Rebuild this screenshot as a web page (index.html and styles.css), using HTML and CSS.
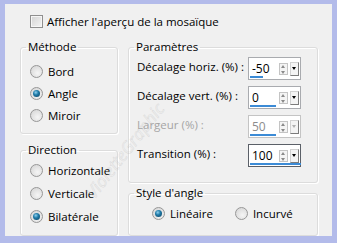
FILE: index.html
```html
<!DOCTYPE html>
<html lang="fr">
<head>
  <meta charset="UTF-8" />
  <title>Mosaïque</title>
  <link rel="stylesheet" href="styles.css">
</head>
<body>
  <div class="dialog">
    <label class="check-row">
      <span class="checkbox"></span>
      Afficher l'aperçu de la mosaïque
    </label>

    <div class="columns">
      <div class="col-left">
        <fieldset class="group method">
          <legend>Méthode</legend>
          <div class="radio-row"><span class="radio"></span>Bord</div>
          <div class="radio-row"><span class="radio checked"></span>Angle</div>
          <div class="radio-row"><span class="radio"></span>Miroir</div>
        </fieldset>

        <fieldset class="group direction">
          <legend>Direction</legend>
          <div class="radio-row"><span class="radio"></span>Horizontale</div>
          <div class="radio-row"><span class="radio"></span>Verticale</div>
          <div class="radio-row"><span class="radio checked"></span>Bilatérale</div>
        </fieldset>
      </div>

      <div class="col-right">
        <fieldset class="group params">
          <legend>Paramètres</legend>
          <div class="field-row">
            <span class="field-label">Décalage horiz. (%) :</span>
            <div class="spin">
              <span class="spin-value">-50</span>
              <span class="spin-arrows"><i class="up"></i><i class="down"></i></span>
              <span class="spin-drop"></span>
              <span class="spin-bar" style="width: 13px"></span>
            </div>
          </div>
          <div class="field-row">
            <span class="field-label">Décalage vert. (%) :</span>
            <div class="spin">
              <span class="spin-value">0</span>
              <span class="spin-arrows"><i class="up"></i><i class="down"></i></span>
              <span class="spin-drop"></span>
              <span class="spin-bar" style="width: 26px"></span>
            </div>
          </div>
          <div class="field-row disabled">
            <span class="field-label">Largeur (%) :</span>
            <div class="spin">
              <span class="spin-value">50</span>
              <span class="spin-arrows"><i class="up"></i><i class="down"></i></span>
              <span class="spin-drop"></span>
              <span class="spin-bar" style="width: 26px"></span>
            </div>
          </div>
          <div class="field-row">
            <span class="field-label">Transition (%) :</span>
            <div class="spin focused">
              <span class="spin-value">100</span>
              <span class="spin-arrows"><i class="up"></i><i class="down"></i></span>
              <span class="spin-drop"></span>
              <span class="spin-bar" style="width: 51px"></span>
            </div>
          </div>
        </fieldset>

        <fieldset class="group style">
          <legend>Style d'angle</legend>
          <div class="style-row">
            <div class="radio-row"><span class="radio checked"></span>Linéaire</div>
            <div class="radio-row"><span class="radio"></span>Incurvé</div>
          </div>
        </fieldset>
      </div>
    </div>

    <span class="watermark">VioletteGraphic</span>
  </div>
</body>
</html>
```

FILE: styles.css
```css
body {
  margin: 0;
  font-family: "Open Sans", "Noto Sans", sans-serif;
  font-size: 11.5px;
  color: #000;
}

.dialog {
  position: relative;
  overflow: hidden;
  width: 337px;
  height: 243px;
  box-sizing: border-box;
  border-style: solid;
  border-color: #b3bbea;
  border-width: 4px 5px 7px 5px;
  background: #f0f0f0;
  padding: 9px 14px 0 15px;
}

.check-row {
  display: flex;
  align-items: center;
  gap: 4px;
  height: 16px;
  padding-left: 10px;
}

.checkbox {
  width: 11px;
  height: 11px;
  border: 1px solid #8f8f8f;
  background: linear-gradient(135deg, #d4d4d4, #f4f4f4);
  box-shadow: inset 0 0 0 1px #f6f6f6;
}

.columns {
  display: flex;
  gap: 10px;
  margin-top: 10px;
}

.col-left {
  display: flex;
  flex-direction: column;
  gap: 8px;
  width: 98px;
}

.col-right {
  display: flex;
  flex-direction: column;
  gap: 2px;
  width: 190px;
}

.group {
  margin: 0;
  border: 1px solid #dcdcdc;
  border-radius: 3px;
  box-shadow: inset 1px 1px 0 #fff, 1px 1px 0 #fff;
  min-width: 0;
}

.group legend {
  padding: 0 2px;
  margin-left: -4px;
  line-height: 16px;
}

.method {
  padding: 5px 0 7px 9px;
}

.direction {
  padding: 1px 0 7px 9px;
}

.direction .radio-row {
  height: 23px;
}

.radio-row {
  display: flex;
  align-items: center;
  gap: 5px;
  height: 22px;
}

.radio {
  position: relative;
  width: 11px;
  height: 11px;
  border: 1px solid #979797;
  border-radius: 50%;
  background: radial-gradient(circle at 60% 65%, #f5f5f5, #d2d2d2);
}

.radio.checked::after {
  content: "";
  position: absolute;
  left: 2px;
  top: 2px;
  width: 7px;
  height: 7px;
  border-radius: 50%;
  background: radial-gradient(circle at 40% 35%, #8fd0ee 0, #1f7ba8 40%, #0d3e5c 100%);
}

.params {
  padding: 2px 16px 15px 8px;
}

.params legend {
  margin-left: -3px;
}

.field-row {
  display: flex;
  justify-content: space-between;
  align-items: center;
  height: 23px;
  margin-bottom: 6px;
}

.field-row:last-child {
  margin-bottom: 0;
}

.field-label {
  margin-top: -4px;
}

.disabled .field-label {
  color: #a5a5a5;
}

.spin {
  position: relative;
  display: flex;
  align-items: center;
  width: 51px;
  height: 21px;
  border: 1px solid #a9abaf;
  background: #fff;
}

.spin.focused {
  border-color: #5b6068;
}

.spin-value {
  flex: 1;
  padding-left: 3px;
  font-size: 12px;
}

.disabled .spin {
  border-color: #c4c4c4;
}

.disabled .spin-value {
  color: #8c8c8c;
}

.spin-arrows {
  display: flex;
  flex-direction: column;
  gap: 1px;
  width: 9px;
  height: 12px;
  margin-right: 2px;
  border: 1px solid #c4c4c4;
  box-sizing: border-box;
  background: #f4f4f4;
}

.spin-arrows i {
  flex: 1;
  display: block;
  position: relative;
}

.spin-arrows .up::after,
.spin-arrows .down::after {
  content: "";
  position: absolute;
  left: 1px;
  border-left: 2.5px solid transparent;
  border-right: 2.5px solid transparent;
}

.spin-arrows .up::after {
  top: 1px;
  border-bottom: 3px solid #8a8a8a;
}

.spin-arrows .down::after {
  bottom: 0;
  border-top: 3px solid #8a8a8a;
}

.spin-drop {
  position: relative;
  width: 9px;
  height: 14px;
  margin-right: 1px;
  border: 1px solid #d2d2d2;
  border-right-color: #7c7c7c;
  border-bottom-color: #7c7c7c;
  box-sizing: border-box;
  background: #f4f4f4;
}

.spin-drop::after {
  content: "";
  position: absolute;
  left: 1px;
  top: 4px;
  border-left: 2.5px solid transparent;
  border-right: 2.5px solid transparent;
  border-top: 3px solid #000;
}

.disabled .spin-drop::after {
  border-top-color: #b0b0b0;
}

.spin-bar {
  position: absolute;
  left: 1px;
  bottom: 1px;
  height: 2px;
  background: #3c8bd6;
}

.style {
  padding: 1px 0 11px 8px;
}

.style legend {
  margin-left: -3px;
}

.style-row {
  display: flex;
  gap: 22px;
  padding-left: 15px;
}

.watermark {
  position: absolute;
  left: 62px;
  top: 135px;
  transform: rotate(-52deg);
  font-size: 17px;
  font-style: italic;
  color: transparent;
  -webkit-text-stroke: 0.5px rgba(175, 175, 175, 0.35);
  pointer-events: none;
}
```
